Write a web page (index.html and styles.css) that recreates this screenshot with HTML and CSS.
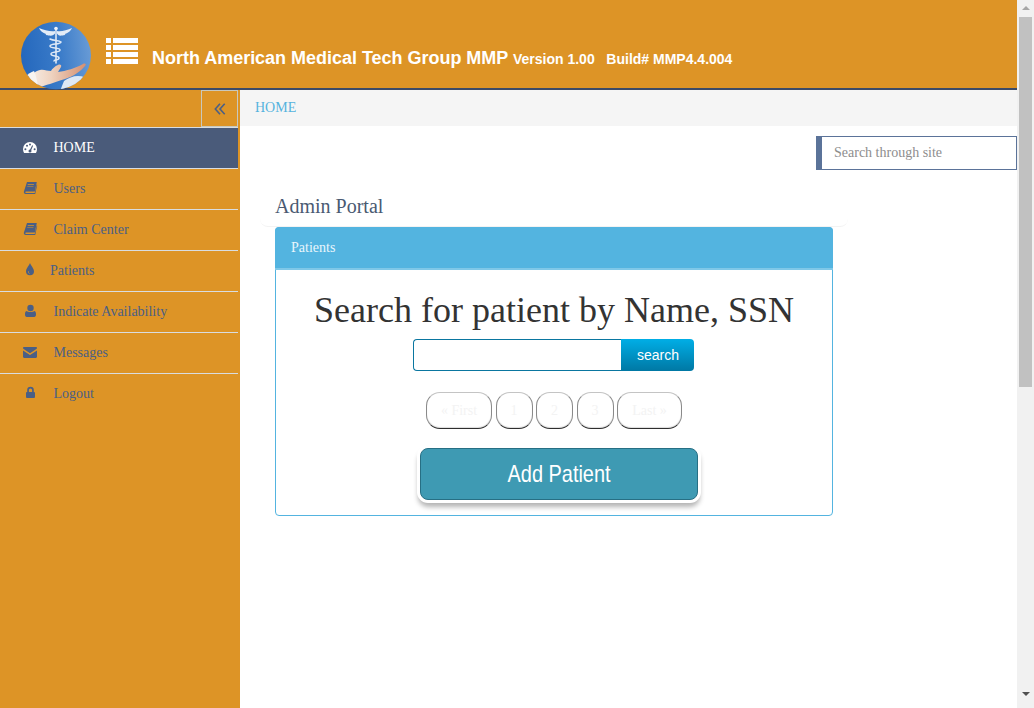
FILE: index.html
```html
<!DOCTYPE html>
<html lang="en">
<head>
<meta charset="utf-8">
<title>North American Medical Tech Group MMP</title>
<link rel="stylesheet" href="styles.css">
</head>
<body>
<div class="page">
  <header class="topbar">
    <svg class="logo" viewBox="0 0 72 72" width="72" height="72" aria-hidden="true">
      <defs>
        <linearGradient id="sky" x1="0" y1="0.4" x2="1" y2="0.3">
          <stop offset="0" stop-color="#2568bd"/>
          <stop offset="0.55" stop-color="#3b7cc9"/>
          <stop offset="1" stop-color="#6a9cd6"/>
        </linearGradient>
        <linearGradient id="skin" x1="0" y1="0" x2="1" y2="0">
          <stop offset="0" stop-color="#f6f0ea"/>
          <stop offset="0.4" stop-color="#efd3c0"/>
          <stop offset="1" stop-color="#d48f70"/>
        </linearGradient>
        <clipPath id="disc"><ellipse cx="36" cy="36.500" rx="35" ry="33.800"/></clipPath>
      </defs>
      <ellipse cx="36" cy="36.500" rx="35" ry="33.800" fill="url(#sky)"/>
      <g clip-path="url(#disc)">
        <path d="M44 62c4-3 9-5 14-5 5 0 9 2 14 5v10H40z" fill="#dfe9f5"/>
        <path d="M8 60c3-4 7-8 12-9 4-1 7 1 11 1 1-2 4-5 7-6 2-1 4 0 3 2l-3 5c8-1 18-4 25-8 2-1 4 0 2 2-4 5-11 10-20 13-6 2-10 3-15 5-4 1-8 2-11 4z" fill="url(#skin)"/>
        <path d="M5 58c3-3 6-5 9-6 2 4 3 9 4 16l-6 4z" fill="#f7f4f1"/>
      </g>
      <g fill="none" stroke="#dfe9f6" stroke-linecap="round">
        <path d="M36 10v34" stroke-width="1.600"/>
        <path d="M30 20c4 2 9 1 11 3-1 3-10 1-11 4 0 3 10 1 10 4s-9 1-9 4 8 1 8 4-5 1-5 3" stroke-width="1.500"/>
      </g>
      <path d="M35 12c-4 1-11-1-16-3 1 3 4 5 7 6-1 .5 1 1.500 3 1.500 3 .5 5-.5 6-2zM37 12c4 1 10-1 15-3-1 3-4 5-7 6 1 .5-1 1.500-3 1.500-3 .5-4-.5-5-2z" fill="#e3ecf7"/>
      <circle cx="36" cy="9.500" r="1.800" fill="#eef3fa"/>
    </svg>
    <svg class="list-icon" viewBox="0 0 32 26" width="32" height="26" aria-hidden="true">
      <path d="M0 0h5v5H0zM7 0h25v5H7zM0 7h5v5H0zM7 7h25v5H7zM0 14h5v5H0zM7 14h25v5H7zM0 21h5v5H0zM7 21h25v5H7z" fill="#fff"/>
    </svg>
    <h1 class="brand">North American Medical Tech Group MMP <span class="version">Version 1.00 &nbsp; Build# MMP4.4.004</span></h1>
  </header>
  <div class="shell">
    <aside class="sidebar">
      <div class="toggle-row">
        <button class="toggle" type="button" aria-label="Collapse">
          <svg viewBox="0 0 12 12" width="12" height="12"><path d="M6 .8 1.300 6 6 11.200M10.700.8 6 6l4.700 5.200" fill="none" stroke="#4a5f85" stroke-width="1.600"/></svg>
        </button>
      </div>
      <nav class="nav">
        <a class="nav-item active" href="#">
          <svg class="ico" viewBox="0 0 16 16"><path d="M8 2a7 7 0 0 0-7 7c0 1.600.4 2.900 1.100 4h11.800c.7-1.100 1.100-2.400 1.100-4a7 7 0 0 0-7-7z" fill="#fff"/><g fill="#4a5b7a"><circle cx="3.400" cy="9.300" r="1"/><circle cx="5" cy="5.800" r="1"/><circle cx="8" cy="4.500" r="1"/><circle cx="12.600" cy="9.300" r="1"/><circle cx="8" cy="11" r="1.500"/><path d="m7.400 10.800 2.800-5.500.9.400-2.500 5.700z"/></g></svg>
          <span>HOME</span>
        </a>
        <a class="nav-item" href="#">
          <svg class="ico" viewBox="0 1 16 16"><path d="M5 2h9.800l-2 9.500H4.400c-.8 0-1.100.5-1 1 .1.400.4.600 1 .6h8.300l2-8.600.5.500-2 9H3.800C2.300 14 1.600 13 1.900 11.600zm.8 2.300-.15.600h6.200l.15-.6zM5.300 6.500l-.15.600h6.200l.15-.6z" fill="#4a5f85" fill-rule="evenodd"/></svg>
          <span>Users</span>
        </a>
        <a class="nav-item" href="#">
          <svg class="ico" viewBox="0 1 16 16"><path d="M5 2h9.800l-2 9.500H4.400c-.8 0-1.100.5-1 1 .1.400.4.600 1 .6h8.300l2-8.600.5.500-2 9H3.800C2.300 14 1.600 13 1.900 11.600zm.8 2.300-.15.600h6.200l.15-.6zM5.300 6.500l-.15.600h6.200l.15-.6z" fill="#4a5f85" fill-rule="evenodd"/></svg>
          <span>Claim Center</span>
        </a>
        <a class="nav-item tight" href="#">
          <svg class="ico" viewBox="0 1 16 16"><path d="M8 1c.5 2.200 4 5.200 4 8.300a4 4 0 0 1-8 0C4 6.200 7.500 3.200 8 1zM6.300 9.300c-.5 1.500.6 2.600 1.700 2.600-1-.6-1.300-1.500-1.100-2.800z" fill="#4a5f85" fill-rule="evenodd"/></svg>
          <span>Patients</span>
        </a>
        <a class="nav-item" href="#">
          <svg class="ico" viewBox="0 1 16 16"><circle cx="8.500" cy="5" r="3.200" fill="#4a5f85"/><path d="M4.500 8c1 .7 2.500 1.100 4 1.100s3-.4 4-1.100c1.200.3 1.500 1.700 1.500 3.500 0 1.200-.6 2.500-1.800 2.500H4.800C3.600 14 3 12.700 3 11.500 3 9.700 3.300 8.300 4.500 8z" fill="#4a5f85"/></svg>
          <span>Indicate Availability</span>
        </a>
        <a class="nav-item" href="#">
          <svg class="ico" viewBox="0 1 16 16"><path d="M2.200 3h11.600c.7 0 1.200.4 1.200 1 0 .4-.2.800-.6 1.100L8 9.300 1.600 5.100C1.200 4.800 1 4.400 1 4c0-.6.500-1 1.200-1zM1 6.400l7 4.500 7-4.500v6.400c0 .7-.5 1.200-1.200 1.200H2.200C1.500 14 1 13.500 1 12.800z" fill="#4a5f85"/></svg>
          <span>Messages</span>
        </a>
        <a class="nav-item" href="#">
          <svg class="ico" viewBox="0 1 16 16"><path d="M5.200 7V5a3.300 3.300 0 0 1 6.600 0v2h.3c.5 0 .9.400.9.900v4.200c0 .5-.4.900-.9.900H4.900c-.5 0-.9-.4-.9-.9V7.900c0-.5.4-.9.900-.9zm1.700 0h3.200V5a1.600 1.600 0 0 0-3.200 0z" fill="#4a5f85" fill-rule="evenodd"/></svg>
          <span>Logout</span>
        </a>
      </nav>
    </aside>
    <main class="main">
      <div class="crumbs"><a href="#">HOME</a></div>
      <div class="toolbar">
        <input class="site-search" type="text" placeholder="Search through site">
      </div>
      <div class="title-row"><h2>Admin Portal</h2></div>
      <section class="panel">
        <div class="panel-head">Patients</div>
        <div class="panel-body">
          <h3 class="lookup">Search for patient by Name, SSN</h3>
          <form class="search-form">
            <input class="search-input" type="text">
            <button class="search-btn" type="button">search</button>
          </form>
          <div class="pager">
            <a class="page-link first" href="#">« First</a>
            <a class="page-link" href="#">1</a>
            <a class="page-link" href="#">2</a>
            <a class="page-link" href="#">3</a>
            <a class="page-link last" href="#">Last »</a>
          </div>
          <button class="add-btn" type="button"><span class="add-label">Add Patient</span></button>
        </div>
      </section>
    </main>
  </div>
</div>
<div class="scrollbar" aria-hidden="true">
  <span class="arrow up"></span>
  <span class="thumb"></span>
  <span class="arrow down"></span>
</div>
</body>
</html>
```

FILE: styles.css
```css
* { box-sizing: border-box; }
html, body { margin: 0; height: 100%; overflow: hidden; }
body {
  display: flex;
  background: #fff;
  font-family: "Liberation Serif", "Times New Roman", serif;
  font-size: 14px;
  color: #333;
}
.page { flex: 1; min-width: 0; display: flex; flex-direction: column; height: 708px; }

.topbar {
  flex: none;
  height: 90px;
  background: #dd9426;
  border-bottom: 2px solid #3b4a68;
  display: flex;
  align-items: flex-start;
  padding-left: 20px;
}
.logo { margin-top: 19px; flex: none; }
.list-icon { margin: 38px 0 0 14px; flex: none; }
.brand {
  margin: 47px 0 0 14px;
  font: bold 18px/22px "Liberation Sans", Arial, sans-serif;
  letter-spacing: -0.02px;
  color: #fff;
  white-space: nowrap;
}
.version { font-size: 14px; letter-spacing: 0; }

.shell { flex: 1; display: flex; min-height: 0; }
.sidebar { flex: none; width: 240px; background: #dd9426; }
.toggle-row { height: 37px; display: flex; justify-content: flex-end; padding-right: 2px; }
.toggle {
  width: 37px;
  height: 37px;
  padding: 0;
  background: transparent;
  border: 1px solid #c9c8bd;
  display: flex;
  align-items: center;
  justify-content: center;
}
.nav { margin-right: 2px; border-top: 1px solid #d9dde0; }
.nav-item {
  height: 41px;
  display: flex;
  align-items: center;
  gap: 15.500px;
  padding-left: 22px;
  border-bottom: 1px solid #d9dde0;
  color: #4a5f85;
  text-decoration: none;
}
.nav-item:last-child { border-bottom-color: transparent; }
.nav-item.tight { gap: 12px; }
.nav-item.active { background: #4a5b7a; color: #fff; }
.ico { width: 16px; height: 16px; flex: none; }

.main { flex: 1; min-width: 0; }
.crumbs { height: 36px; background: #f5f5f5; padding-left: 15px; line-height: 35px; }
.crumbs a { color: #55b3de; text-decoration: none; }
.toolbar { display: flex; justify-content: flex-end; padding-top: 10px; }
.site-search {
  width: 201px;
  height: 34px;
  padding: 0 0 0 12px;
  border: 1px solid #5b7399;
  border-left-width: 6px;
  font: 14px "Liberation Serif", serif;
  outline: none;
}
.site-search::placeholder { color: #8d8d8d; opacity: 1; }
.title-row {
  width: 588px;
  margin-left: 20px;
  height: 57px;
  padding: 25px 0 0 15px;
  border-bottom: 1px solid #f3f3f3;
  border-radius: 0 0 8px 8px;
}
.title-row h2 { margin: 0; font-size: 20px; font-weight: 400; line-height: 23px; color: #4a5a72; }

.panel {
  width: 558px;
  margin-left: 35px;
  border: 1px solid #53b4e0;
  border-radius: 4px;
  height: 289px;
}
.panel-head {
  height: 43px;
  margin: -1px -1px 0;
  padding: 0 16px;
  background: #53b4e0;
  border-bottom: 2px solid #7fc8e8;
  border-radius: 4px 4px 0 0;
  color: #eaf6fc;
  line-height: 41px;
}
.panel-body { display: flex; flex-direction: column; align-items: center; }
.lookup {
  margin: 20px 0 0;
  font-size: 36px;
  font-weight: 400;
  line-height: 41px;
  color: #333;
}
.search-form { display: flex; margin: 8px 0 0 -2px; }
.search-input {
  width: 208px;
  height: 32px;
  border: 1px solid #0a76a0;
  border-right: 0;
  border-radius: 4px 0 0 4px;
  outline: none;
  padding: 0 8px;
}
.search-btn {
  width: 73px;
  height: 32px;
  padding: 0 0 0 2px;
  border: 0;
  border-radius: 0 4px 4px 0;
  background: linear-gradient(#00aee6, #0078a4);
  color: #fff;
  font: 14px "Liberation Sans", Arial, sans-serif;
}
.pager { display: flex; gap: 3.500px; margin: 21px 0 0 0; }
.page-link {
  width: 37px;
  height: 37px;
  border-radius: 14px;
  border: 1px solid #8a8a8a;
  border-top-color: #c4c4c4;
  border-bottom-color: #2e2e2e;
  box-shadow: inset 0 -1px 1px #dcdcdc;
  color: #f3f3f3;
  text-align: center;
  line-height: 35px;
  text-decoration: none;
}
.page-link.first { width: 66px; }
.page-link.last { width: 65px; }
.add-btn {
  width: 278px;
  height: 52px;
  margin: 19px 0 0 10px;
  padding: 0;
  background: #3e9ab3;
  border: 1px solid #276f84;
  border-radius: 8px;
  box-shadow: 0 0 0 3px #fff, 0 5px 5px 2px #b5b5b5;
  color: #fff;
  font: 24px "Liberation Sans", Arial, sans-serif;
}
.add-label { display: inline-block; transform: scaleX(.83); }

.scrollbar {
  flex: none;
  width: 17px;
  height: 708px;
  background: #f1f1f1;
  display: flex;
  flex-direction: column;
  align-items: center;
}
.arrow { flex: none; width: 0; height: 0; border-left: 4px solid transparent; border-right: 4px solid transparent; }
.arrow.up { margin-top: 6px; margin-bottom: 7px; border-bottom: 4px solid #a6a6a6; }
.arrow.down { margin-top: 305px; border-top: 4px solid #505050; }
.thumb { flex: none; width: 13px; height: 370px; background: #c1c1c1; }
```
